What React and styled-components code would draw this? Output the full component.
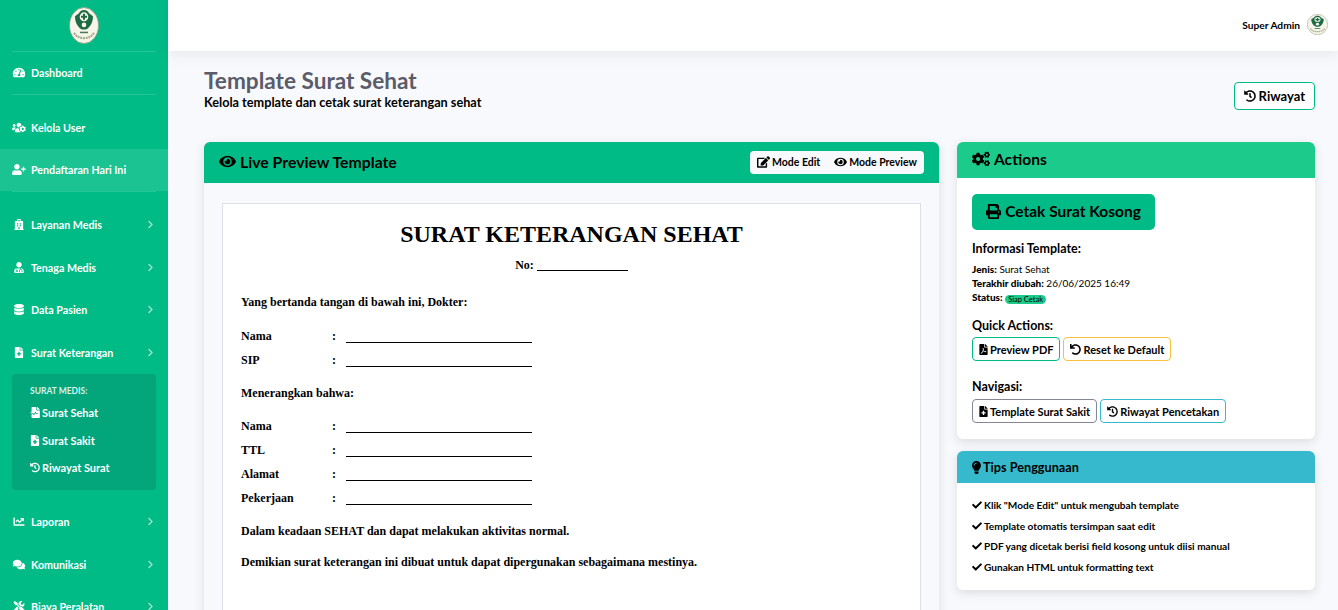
import React from 'react';
import styled, { createGlobalStyle } from 'styled-components';
import {
  FaTachometerAlt, FaUsersCog, FaUserPlus, FaHospital, FaUserMd, FaDatabase, FaFileMedical,
  FaFileMedicalAlt, FaHistory, FaChartLine, FaComments, FaTools, FaChevronRight, FaEye, FaEdit,
  FaCogs, FaPrint, FaFilePdf, FaUndo, FaLightbulb, FaCheck,
} from 'react-icons/fa';

const GlobalStyle = createGlobalStyle`
  html, body { margin: 0; padding: 0; height: 100%; overflow: hidden; }
  body { font-family: Lato, "Noto Sans", sans-serif; background: #f8f9fc; color: #000; }
  * { box-sizing: border-box; }
`;

const Shell = styled.div`
  display: flex;
  height: 100vh;
  overflow: hidden;
`;

const Sidebar = styled.aside`
  width: 168px;
  flex: none;
  background: #00bb86;
  color: #fff;
  overflow: hidden;
`;

const Brand = styled.div`
  height: 51px;
  display: flex;
  align-items: center;
  justify-content: center;
`;

const Divider = styled.hr`
  margin: 0 12px;
  border: 0;
  border-top: 1px solid rgba(255, 255, 255, 0.15);
  margin-bottom: ${(p) => p.$after || 0}px;
`;

const NavItem = styled.div`
  height: ${(p) => p.$h || 42}px;
  padding: 0 12px 1px;
  display: flex;
  align-items: center;
  font-size: 10.7px;
  font-weight: 700;
  background: ${(p) => (p.$active ? '#1bc292' : 'transparent')};
  svg.main { width: 14px; height: 11px; margin-right: 5px; flex: none; }
  span { flex: 1; }
  svg.arrow { width: 9px; height: 9px; margin-right: 1px; opacity: 0.6; }
`;

const SubMenu = styled.div`
  margin: 0 12px 11px;
  height: 116px;
  background: #03a67a;
  border-radius: 4px;
  padding-left: 18px;
`;

const SubTitle = styled.div`
  font-size: 8.5px;
  font-weight: 700;
  padding-top: 12px;
  height: 25px;
  color: #d5f3ea;
`;

const SubItem = styled.div`
  height: 27.5px;
  display: flex;
  align-items: center;
  gap: 2px;
  font-size: 11px;
  font-weight: 700;
  svg { width: 10px; height: 11px; flex: none; }
`;

const Main = styled.div`
  flex: 1;
  min-width: 0;
`;

const Topbar = styled.header`
  height: 51px;
  background: #fff;
  box-shadow: 0 2px 14px rgba(58, 59, 69, 0.1);
  display: flex;
  align-items: center;
  justify-content: flex-end;
  padding: 0 10px 2px 0;
  gap: 7px;
  font-size: 10.2px;
  font-weight: 700;
  position: relative;
`;

const Content = styled.main`
  padding: 17px 23px 0 36px;
`;

const PageHead = styled.div`
  display: flex;
  justify-content: space-between;
  align-items: flex-start;
  height: 74px;
`;

const PageTitle = styled.h1`
  margin: 0;
  font-size: 22.6px;
  line-height: 26px;
  font-weight: 700;
  color: #5a5c69;
`;

const PageSub = styled.div`
  font-size: 12.7px;
  line-height: 17px;
  font-weight: 700;
`;

const Columns = styled.div`
  display: grid;
  grid-template-columns: 735px 358px;
  gap: 18px;
  align-items: start;
`;

const Stack = styled.div`
  display: flex;
  flex-direction: column;
  gap: 12px;
`;

const Card = styled.section`
  background: ${(p) => p.$bg || '#fff'};
  border-radius: 6px;
  box-shadow: 0 3px 10px rgba(58, 59, 69, 0.15);
  overflow: hidden;
`;

const CardHead = styled.div`
  height: ${(p) => p.$h}px;
  background: ${(p) => p.$color};
  display: flex;
  align-items: center;
  justify-content: space-between;
  padding: 0 15px;
  font-weight: 700;
  font-size: ${(p) => p.$size}px;
`;

const HeadTitle = styled.div`
  display: flex;
  align-items: center;
  gap: ${(p) => p.$gap || 4}px;
  padding-bottom: ${(p) => p.$lift ?? 2}px;
  svg { flex: none; }
  svg.bulb { width: 9px; height: 13px; }
`;

const ModeGroup = styled.div`
  background: #f8f9fc;
  border-radius: 4px;
  height: 23px;
  display: flex;
  align-items: center;
  gap: 14px;
  padding: 0 7px 2px;
  font-size: 10.5px;
`;

const ModeItem = styled.span`
  display: flex;
  align-items: center;
  gap: 2px;
  svg { width: 13px; height: 12px; }
`;

const OutlineBtn = styled.button`
  font: inherit;
  font-weight: 700;
  font-size: ${(p) => p.$size || 11}px;
  height: ${(p) => p.$h || 24}px;
  margin-top: ${(p) => p.$top || 0}px;
  padding: 0 ${(p) => p.$px || 6}px;
  border: 1px solid ${(p) => p.$color};
  border-radius: 4px;
  background: #fff;
  color: #000;
  display: inline-flex;
  align-items: center;
  gap: ${(p) => p.$gap || 2}px;
  white-space: nowrap;
  svg.narrow { width: 9px; }
`;

const PreviewBody = styled.div`
  padding: 20px 18px 0;
  height: 500px;
`;

const Paper = styled.div`
  background: #fff;
  border: 1px solid #dddfe6;
  height: 480px;
  padding: 0 18px;
  font-family: "Liberation Serif", serif;
  font-weight: 700;
  font-size: 12px;
  line-height: 16px;
`;

const DocTitle = styled.div`
  font-size: 24px;
  line-height: 30px;
  text-align: center;
  margin-top: 15px;
`;

const DocNo = styled.div`
  text-align: center;
  line-height: 16px;
  margin-top: 8px;
`;

const DocLine = styled.p`
  margin: ${(p) => p.$top || 0}px 0 0;
`;

const FieldRow = styled.div`
  display: grid;
  grid-template-columns: 91px 14px 186px;
  height: 24px;
  align-items: end;
  margin-top: ${(p) => p.$top || 0}px;
`;

const Blank = styled.div`
  border-bottom: 1px solid #000;
  height: 16px;
  margin-bottom: 1px;
`;

const Underscore = styled.span`
  display: inline-block;
  width: 91px;
  border-bottom: 1px solid #000;
  height: 12px;
  vertical-align: -2px;
`;

const ActionsBody = styled.div`
  padding: 16px 15px 15px;
  height: 261px;
`;

const PrintBtn = styled.button`
  font: inherit;
  font-weight: 700;
  font-size: 15.5px;
  height: 36px;
  width: 183px;
  padding: 0 0 2px;
  background: #00bb86;
  border: 0;
  border-radius: 5px;
  display: flex;
  align-items: center;
  justify-content: center;
  gap: 4px;
  color: #000;
`;

const InfoHead = styled.div`
  font-size: 12.5px;
  font-weight: 700;
  line-height: 16px;
  margin-top: ${(p) => p.$top}px;
`;

const InfoList = styled.div`
  font-size: 10px;
  line-height: 14px;
  margin-top: 5px;
  b { font-weight: 900; }
`;

const Badge = styled.span`
  display: inline-block;
  background: #1ccb8b;
  border-radius: 5px;
  font-size: 7.5px;
  line-height: 9px;
  padding: 0 3px;
  vertical-align: -1px;
`;

const BtnRow = styled.div`
  display: flex;
  gap: 3px;
  margin-top: ${(p) => p.$top}px;
`;

const TipsBody = styled.div`
  padding: 12px 15px 0;
  height: 107px;
  font-size: 10.1px;
  font-weight: 700;
`;

const Tip = styled.div`
  height: 20.6px;
  display: flex;
  align-items: center;
  gap: 2px;
  svg { width: 10px; height: 10px; flex: none; }
`;

// blurred emblem in the sidebar and the topbar
const Logo = ({ w, h }) => (
  <svg width={w} height={h} viewBox="0 0 30 36" preserveAspectRatio="none">
    <ellipse cx="15" cy="18" rx="14.5" ry="17.5" fill="#f7f5ea" stroke="#8f9a7c" strokeWidth="0.8" />
    <path d="M15 3c-2 0-4 1-5 3L6 9c0 6 3 11 7 13h4c4-2 7-7 7-13l-4-3c-1-2-3-3-5-3z" fill="#1d6a45" />
    <circle cx="15" cy="9.500" r="4.300" fill="#f7f5ea" />
    <path d="M14 6.500h2v2h2v2h-2v2h-2v-2h-2v-2h2z" fill="#1d6a45" />
    <circle cx="15" cy="17.500" r="2.300" fill="#f7f5ea" />
    <path d="M11 24h8v1.500h-8z" fill="#4d7a5c" />
    <path d="M5 25c3 7 17 7 20 0" fill="none" stroke="#a8ae92" strokeWidth="2.200" strokeDasharray="2 0.7" />
  </svg>
);

const sideTop = [
  { icon: FaHospital, label: 'Layanan Medis' },
  { icon: FaUserMd, label: 'Tenaga Medis' },
  { icon: FaDatabase, label: 'Data Pasien' },
  { icon: FaFileMedical, label: 'Surat Keterangan' },
];

const sideBottom = [
  { icon: FaChartLine, label: 'Laporan' },
  { icon: FaComments, label: 'Komunikasi' },
  { icon: FaTools, label: 'Biaya Peralatan' },
];

const tips = [
  'Klik "Mode Edit" untuk mengubah template',
  'Template otomatis tersimpan saat edit',
  'PDF yang dicetak berisi field kosong untuk diisi manual',
  'Gunakan HTML untuk formatting text',
];

const Menu = ({ icon: Icon, label }) => (
  <NavItem $h={42.5}>
    <Icon className="main" />
    <span>{label}</span>
    <FaChevronRight className="arrow" />
  </NavItem>
);

const Field = ({ label, top }) => (
  <FieldRow $top={top}>
    <span>{label}</span>
    <span>:</span>
    <Blank />
  </FieldRow>
);

export default function App() {
  return (
    <Shell>
      <GlobalStyle />
      <Sidebar>
        <Brand><Logo w={30} h={37} /></Brand>
        <Divider />
        <NavItem><FaTachometerAlt className="main" /><span>Dashboard</span></NavItem>
        <Divider $after={12} />
        <NavItem><FaUsersCog className="main" /><span>Kelola User</span></NavItem>
        <NavItem $active><FaUserPlus className="main" /><span>Pendaftaran Hari Ini</span></NavItem>
        <Divider $after={12} />
        {sideTop.map((m) => <Menu key={m.label} {...m} />)}
        <SubMenu>
          <SubTitle>SURAT MEDIS:</SubTitle>
          <SubItem><FaFileMedicalAlt /> Surat Sehat</SubItem>
          <SubItem><FaFileMedical /> Surat Sakit</SubItem>
          <SubItem><FaHistory /> Riwayat Surat</SubItem>
        </SubMenu>
        {sideBottom.map((m) => <Menu key={m.label} {...m} />)}
      </Sidebar>
      <Main>
        <Topbar>
          <span>Super Admin</span>
          <Logo w={21} h={21} />
        </Topbar>
        <Content>
          <PageHead>
            <div>
              <PageTitle>Template Surat Sehat</PageTitle>
              <PageSub>Kelola template dan cetak surat keterangan sehat</PageSub>
            </div>
            <OutlineBtn $color="#00bb86" $size={13} $h={28} $px={9} $top={14} $gap={3}><FaHistory size={12} /> Riwayat</OutlineBtn>
          </PageHead>
          <Columns>
            <Card $bg="#f8f9fc">
              <CardHead $h={41} $color="#00bb86" $size={15.8}>
                <HeadTitle><FaEye size={17} /> Live Preview Template</HeadTitle>
                <ModeGroup>
                  <ModeItem><FaEdit /> Mode Edit</ModeItem>
                  <ModeItem><FaEye /> Mode Preview</ModeItem>
                </ModeGroup>
              </CardHead>
              <PreviewBody>
                <Paper>
                  <DocTitle>SURAT KETERANGAN SEHAT</DocTitle>
                  <DocNo>No: <Underscore /></DocNo>
                  <DocLine $top={21}>Yang bertanda tangan di bawah ini, Dokter:</DocLine>
                  <Field label="Nama" top={10} />
                  <Field label="SIP" />
                  <DocLine $top={17}>Menerangkan bahwa:</DocLine>
                  <Field label="Nama" top={9} />
                  <Field label="TTL" />
                  <Field label="Alamat" />
                  <Field label="Pekerjaan" />
                  <DocLine $top={17}>Dalam keadaan SEHAT dan dapat melakukan aktivitas normal.</DocLine>
                  <DocLine $top={15}>Demikian surat keterangan ini dibuat untuk dapat dipergunakan sebagaimana mestinya.</DocLine>
                </Paper>
              </PreviewBody>
            </Card>
            <Stack>
              <Card>
                <CardHead $h={36} $color="#1ccb8b" $size={15.6}>
                  <HeadTitle><FaCogs size={18} /> Actions</HeadTitle>
                </CardHead>
                <ActionsBody>
                  <PrintBtn><FaPrint size={15} /> Cetak Surat Kosong</PrintBtn>
                  <InfoHead $top={11}>Informasi Template:</InfoHead>
                  <InfoList>
                    <div><b>Jenis:</b> Surat Sehat</div>
                    <div><b>Terakhir diubah:</b> 26/06/2025 16:49</div>
                    <div><b>Status:</b> <Badge>Siap Cetak</Badge></div>
                  </InfoList>
                  <InfoHead $top={14}>Quick Actions:</InfoHead>
                  <BtnRow $top={3}>
                    <OutlineBtn $color="#00bb86"><FaFilePdf size={11} className="narrow" /> Preview PDF</OutlineBtn>
                    <OutlineBtn $color="#f6c23e"><FaUndo size={11} /> Reset ke Default</OutlineBtn>
                  </BtnRow>
                  <InfoHead $top={18}>Navigasi:</InfoHead>
                  <BtnRow $top={4}>
                    <OutlineBtn $color="#858796"><FaFileMedical size={11} className="narrow" /> Template Surat Sakit</OutlineBtn>
                    <OutlineBtn $color="#36b9cc"><FaHistory size={11} /> Riwayat Pencetakan</OutlineBtn>
                  </BtnRow>
                </ActionsBody>
              </Card>
              <Card>
                <CardHead $h={32} $color="#36b9cc" $size={12.7}>
                  <HeadTitle $gap={2} $lift={0}><FaLightbulb size={13} className="bulb" /> Tips Penggunaan</HeadTitle>
                </CardHead>
                <TipsBody>
                  {tips.map((t) => <Tip key={t}><FaCheck /> {t}</Tip>)}
                </TipsBody>
              </Card>
            </Stack>
          </Columns>
        </Content>
      </Main>
    </Shell>
  );
}
